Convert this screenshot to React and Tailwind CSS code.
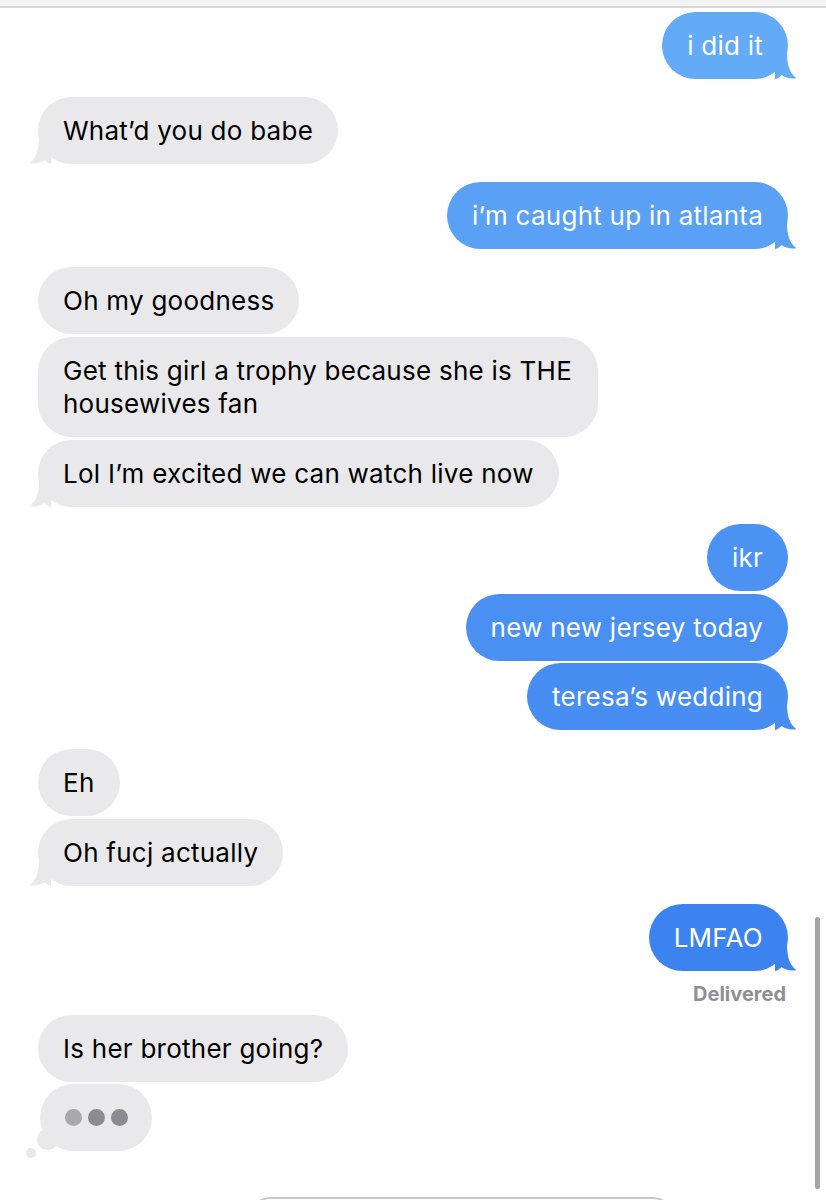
import React from "react";

const messages = [
  { side: "right", text: "i did it", bg: "bg-[#63abf6]", fill: "fill-[#63abf6]", tail: true, mt: "mt-[4px]" },
  { side: "left", text: "What’d you do babe", tail: true, mt: "mt-[18px]" },
  { side: "right", text: "i’m caught up in atlanta", bg: "bg-[#5aa1f5]", fill: "fill-[#5aa1f5]", tail: true, mt: "mt-[18px]" },
  { side: "left", text: "Oh my goodness", mt: "mt-[18px]" },
  { side: "left", text: "Get this girl a trophy because she is THE", text2: "housewives fan", mt: "mt-[3px]" },
  { side: "left", text: "Lol I’m excited we can watch live now", tail: true, mt: "mt-[3px]" },
  { side: "right", text: "ikr", bg: "bg-[#4b92f3]", fill: "fill-[#4b92f3]", mt: "mt-[17px]" },
  { side: "right", text: "new new jersey today", bg: "bg-[#4a90f2]", fill: "fill-[#4a90f2]", mt: "mt-[3px]" },
  { side: "right", text: "teresa’s wedding", bg: "bg-[#488ef2]", fill: "fill-[#488ef2]", tail: true, mt: "mt-[2px]" },
  { side: "left", text: "Eh", mt: "mt-[19px]" },
  { side: "left", text: "Oh fucj actually", tail: true, mt: "mt-[3px]" },
  { side: "right", text: "LMFAO", bg: "bg-[#3d83f0]", fill: "fill-[#3d83f0]", tail: true, mt: "mt-[18px]" },
];

const Tail = ({ side, fill }) => (
  <svg
    width="22"
    height="26"
    viewBox="0 0 22 26"
    className={
      side === "right"
        ? "absolute -right-[9px] bottom-0"
        : "absolute -left-[9px] bottom-0 -scale-x-100"
    }
  >
    <path
      d="M12 0 C12 13 15 20 21.5 25.3 C15 26.2 10 24.6 6.5 22 C4.5 24 2 26 0 26 L0 0 Z"
      className={fill}
    />
  </svg>
);

const Bubble = ({ m }) => {
  const right = m.side === "right";
  return (
    <div className={`flex ${right ? "justify-end" : "justify-start"} ${m.mt}`}>
      <div
        className={`relative rounded-[34px] px-[25px] py-[17px] leading-[33px] text-[26px] tracking-[0.25px] whitespace-nowrap ${
          right ? `${m.bg} text-white` : "bg-[#e9e9eb] text-black"
        } ${m.text2 ? "w-[560px]" : ""}`}
      >
        {m.tail && <Tail side={m.side} fill={right ? m.fill : "fill-[#e9e9eb]"} />}
        <span className="relative">{m.text}</span>
        {m.text2 && (
          <>
            <br />
            <span className="relative">{m.text2}</span>
          </>
        )}
      </div>
    </div>
  );
};

export default function App() {
  return (
    <div className="relative w-[826px] h-[1200px] overflow-hidden bg-white font-['Inter',sans-serif]">
      <div className="h-[8px] bg-[#f3f3f4] border-b-2 border-[#dadadc]" />
      <div className="px-[38px]">
        {messages.map((m, i) => (
          <Bubble key={i} m={m} />
        ))}
        <div className="flex justify-end mt-[11px] pr-[2px]">
          <span className="text-[20px] font-bold text-[#8e8e93] leading-[24px]">Delivered</span>
        </div>
        <div className="mt-[9px]">
          <Bubble m={{ side: "left", text: "Is her brother going?", mt: "mt-0" }} />
        </div>
        <div className="relative mt-[2px] ml-[2px] w-[112px] h-[67px] rounded-full bg-[#e9e9eb] flex items-center justify-center gap-[6px]">
          <span className="w-[17px] h-[17px] rounded-full bg-[#a9a9ad]" />
          <span className="w-[17px] h-[17px] rounded-full bg-[#8c8c90]" />
          <span className="w-[17px] h-[17px] rounded-full bg-[#8c8c90]" />
          <span className="absolute left-[-3px] top-[45px] w-[21px] h-[21px] rounded-full bg-[#e9e9eb]" />
          <span className="absolute left-[-14px] top-[64px] w-[10px] h-[10px] rounded-full bg-[#e9e9eb]" />
        </div>
        <div className="mt-[46px] ml-[212px] w-[423px] h-[20px] rounded-t-[20px] border-t-2 border-x-2 border-[#c8c8ca]" />
      </div>
      <div className="absolute right-[6px] top-[917px] w-[5px] h-[272px] rounded-full bg-[#a3a3a6]" />
    </div>
  );
}
